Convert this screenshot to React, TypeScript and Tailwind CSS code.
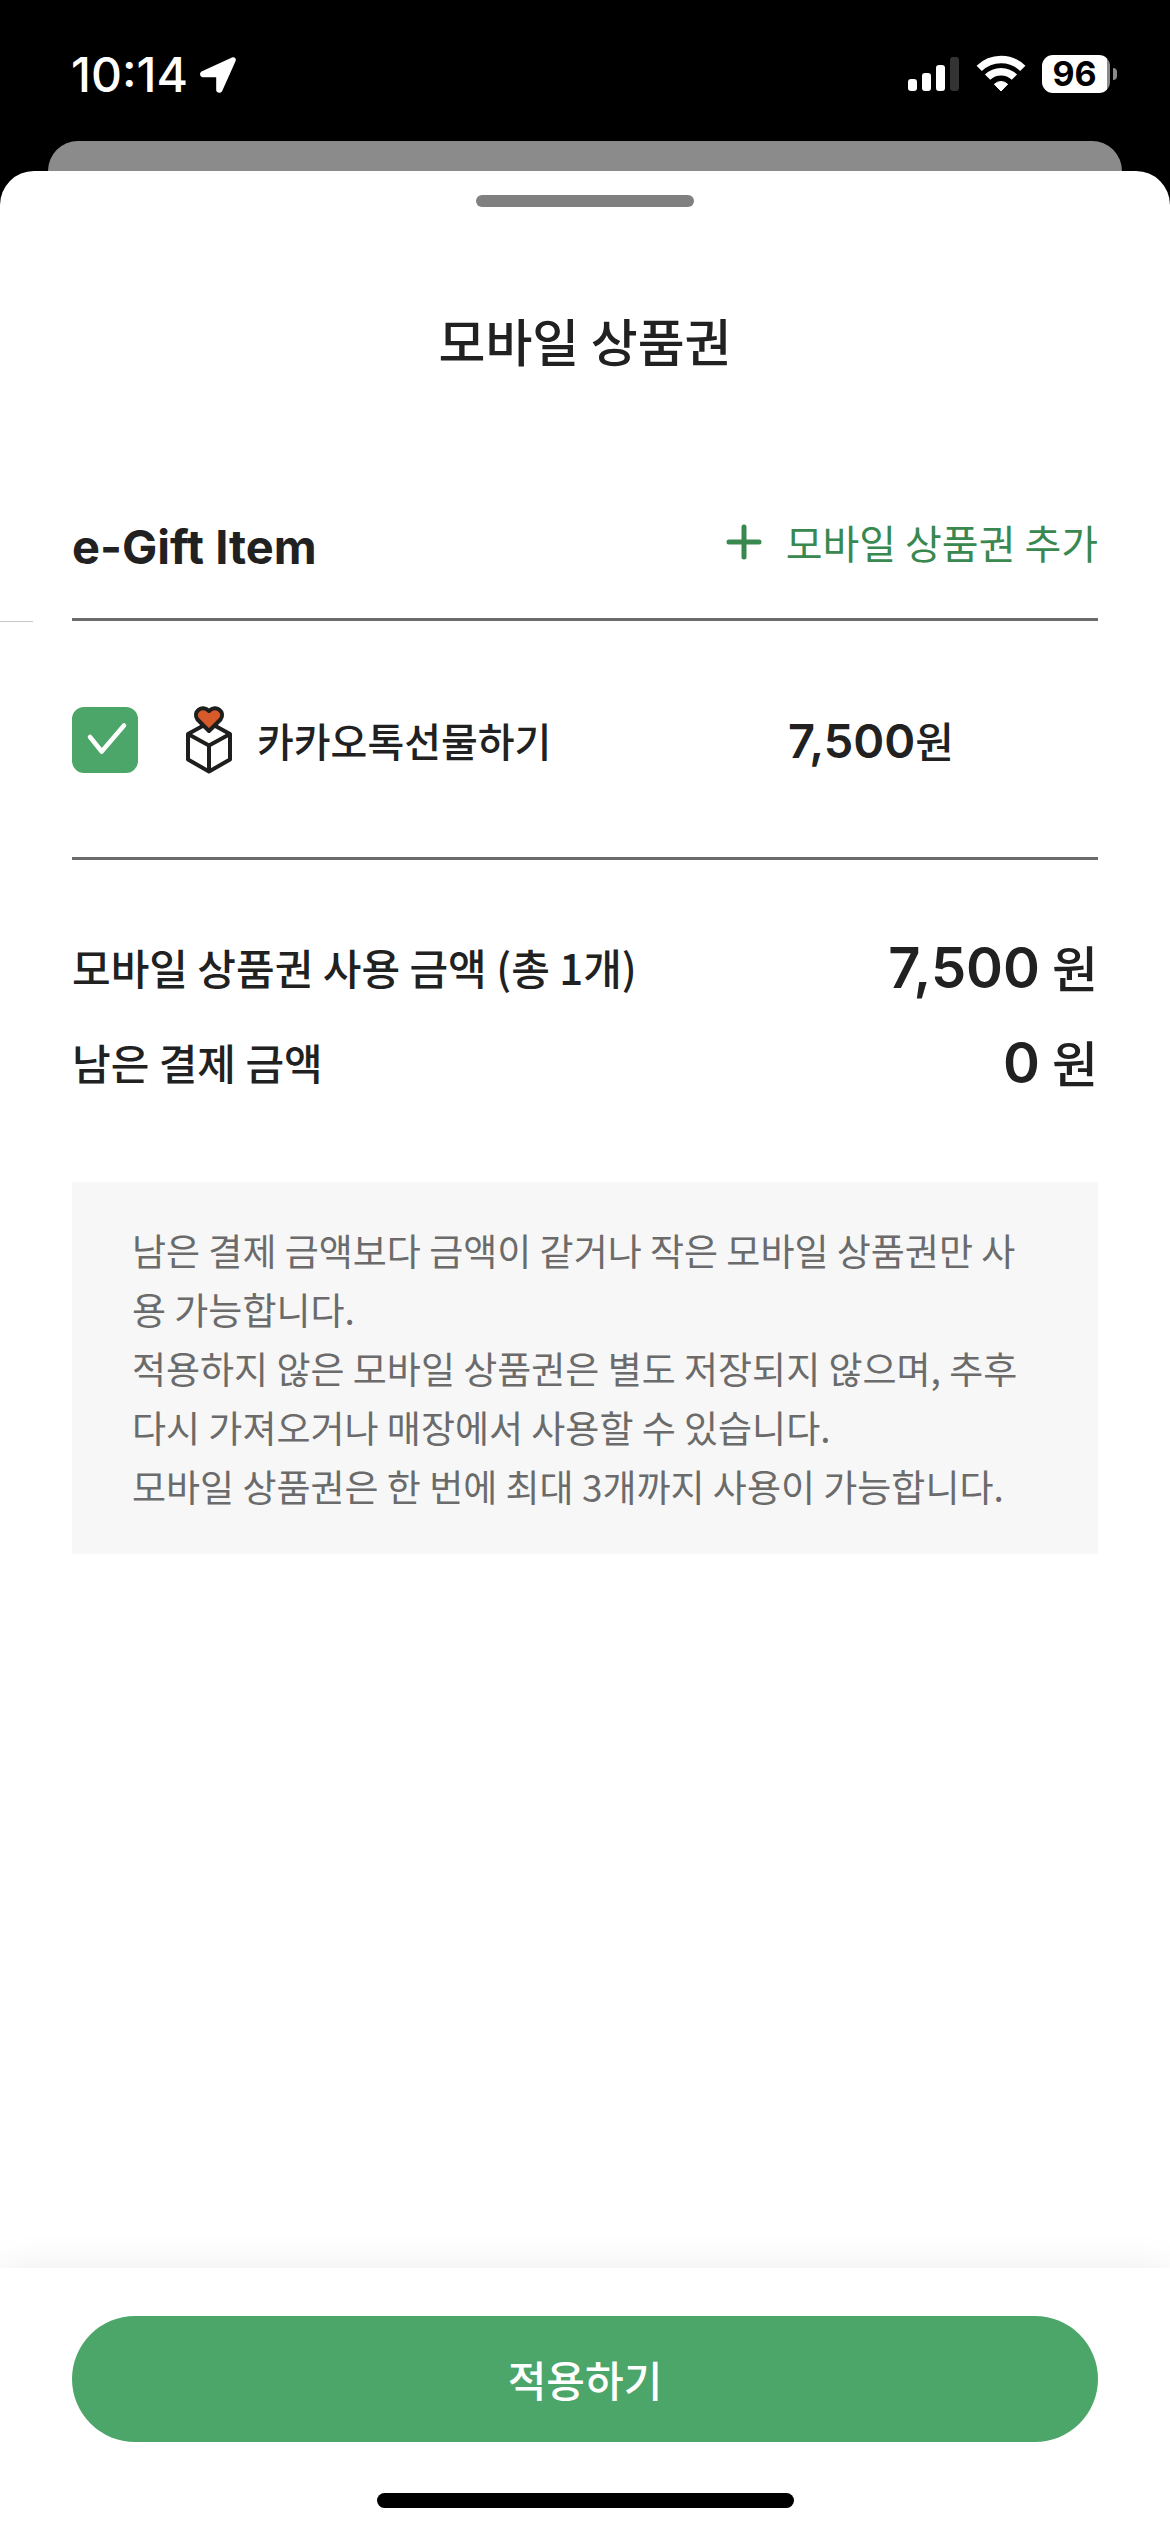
import { useState } from "react";

function StatusBar() {
  return (
    <header className="flex h-[141px] items-start justify-between bg-black pt-[46px] pr-[53px] pl-[71px] text-white">
      <div className="flex items-center gap-3">
        <time className="font-['Inter',sans-serif] text-[48px] leading-[58px] font-medium">10:14</time>
        <svg viewBox="0 0 36 36" className="size-9" fill="currentColor" aria-hidden="true">
          <path d="M32 .4C34.5-.6 36.6 1.500 35.600 4L22.200 34C21 36.800 16.200 36.200 16.200 33V20.300H3C-.4 20.300-1 15.600 2 14.300Z" />
        </svg>
      </div>
      <div className="flex items-center gap-4 pt-[9px]">
        <svg viewBox="0 0 52 38" className="h-[38px] w-[52px]" aria-hidden="true">
          <g fill="#fff">
            <rect x="0" y="24" width="9" height="12" rx="3" />
            <rect x="14" y="18" width="9" height="18" rx="3" />
            <rect x="28" y="10" width="9" height="26" rx="3" />
          </g>
          <rect x="42" y="2" width="9" height="34" rx="3" fill="#333" />
        </svg>
        <svg viewBox="0 0 50 38" className="h-[38px] w-[50px]" aria-hidden="true">
          <g fill="none" stroke="#fff" strokeWidth="7.500">
            <path d="M3.200 13.400A31 31 0 0 1 46.800 13.400" />
            <path d="M11.600 22.200A19 19 0 0 1 38.400 22.200" />
          </g>
          <path d="M25 36L18.400 29.200A9.500 9.500 0 0 1 31.600 29.200Z" fill="#fff" stroke="#fff" strokeWidth="1" strokeLinejoin="round" />
        </svg>
        <div className="flex items-center gap-[3px]">
          <div className="flex h-[38px] w-[68px] items-center justify-center rounded-[11px] bg-linear-to-r from-white from-96% to-[#8a8a8a] to-96% pr-[3px] font-['Inter',sans-serif] text-[34px] leading-[38px] font-bold text-black">
            96
          </div>
          <div className="h-3 w-1 rounded-r-full bg-[#8a8a8a]" />
        </div>
      </div>
    </header>
  );
}

function GiftIcon() {
  return (
    <svg viewBox="0 0 48 68" className="h-[68px] w-12" fill="none" stroke="#1e1e1c" strokeWidth="4" strokeLinejoin="round" aria-hidden="true">
      <path d="M24 16.500L45 28V53.500L24 65.500L3 53.500V28Z" />
      <path d="M3 28L24 39.500L45 28M24 39.500V65" />
      <path d="M24 25L12.500 13.500C7 6 17 -2 24 5C31 -2 41 6 35.500 13.500Z" fill="#d75a2b" />
    </svg>
  );
}

function Amount({ value }: { value: string }) {
  return (
    <dd className="flex items-baseline gap-3">
      <span className="font-['Inter',sans-serif] text-[56px] leading-[60px] font-semibold">{value}</span>
      <span className="text-[50px] leading-[60px] font-medium">원</span>
    </dd>
  );
}

const notes = [
  "남은 결제 금액보다 금액이 같거나 작은 모바일 상품권만 사용 가능합니다.",
  "적용하지 않은 모바일 상품권은 별도 저장되지 않으며, 추후 다시 가져오거나 매장에서 사용할 수 있습니다.",
  "모바일 상품권은 한 번에 최대 3개까지 사용이 가능합니다.",
];

export default function App() {
  const [checked, setChecked] = useState(true);

  return (
    <div className="flex min-h-screen flex-col bg-black font-['Noto_Sans_CJK_KR',sans-serif] text-[#212121]">
      <StatusBar />
      <div className="mx-12 -mb-[30px] h-[60px] rounded-t-[30px] bg-[#8b8b8b]" />

      <main className="relative flex grow flex-col rounded-t-[34px] bg-white">
        <div className="mx-auto mt-6 h-3 w-[218px] rounded-full bg-[#808080]" />
        <h1 className="mt-[103px] text-center text-[51px] leading-[60px] font-medium">모바일 상품권</h1>

        <section className="relative mt-[145px] px-[72px]">
          <div className="absolute bottom-0 left-0 h-px w-[33px] translate-y-px bg-[#c8c8c8]" />
          <div className="flex items-start justify-between border-b-[3px] border-[#6b6b6b] pb-[39px]">
            <h2 className="font-['Inter',sans-serif] text-[47px] leading-[64px] font-bold">e-Gift Item</h2>
            <button type="button" className="flex items-center gap-6 text-[40px] leading-[54px] text-[#388850]">
              <svg viewBox="0 0 36 36" className="size-9" stroke="currentColor" strokeWidth="5" strokeLinecap="round" aria-hidden="true">
                <path d="M18 3V33M3 18H33" />
              </svg>
              모바일 상품권 추가
            </button>
          </div>
        </section>

        <section className="mx-[72px] flex items-center border-b-[3px] border-[#6b6b6b] pt-[85px] pb-[83px]">
          <label className="flex items-center">
            <span className="relative">
              <input
                type="checkbox"
                checked={checked}
                onChange={(e) => setChecked(e.target.checked)}
                className="peer block size-[66px] appearance-none rounded-xl border-2 border-[#4ca669] bg-white checked:bg-[#4ca669]"
              />
              <svg viewBox="0 0 66 66" className="pointer-events-none absolute inset-0 hidden size-[66px] peer-checked:block" fill="none" stroke="#fff" strokeWidth="4.500" strokeLinecap="round" strokeLinejoin="round" aria-hidden="true">
                <path d="M18 30L29.700 44.500L52 18.500" />
              </svg>
            </span>
            <span className="ml-[47px]">
              <GiftIcon />
            </span>
            <span className="ml-6 text-[40px] leading-[60px] font-medium">카카오톡선물하기</span>
          </label>
          <p className="mr-[144px] ml-auto flex items-baseline">
            <span className="font-['Inter',sans-serif] text-[47px] leading-[60px] font-semibold">7,500</span>
            <span className="text-[42px] leading-[60px] font-medium">원</span>
          </p>
        </section>

        <dl className="mx-[72px] mt-[59px]">
          <div className="flex h-[95px] items-center justify-between">
            <dt className="text-[42px] leading-[60px] font-medium">모바일 상품권 사용 금액 (총 1개)</dt>
            <Amount value="7,500" />
          </div>
          <div className="flex h-[95px] items-center justify-between">
            <dt className="text-[42px] leading-[60px] font-medium">남은 결제 금액</dt>
            <Amount value="0" />
          </div>
        </dl>

        <div className="mx-[72px] mt-[73px] bg-[#f7f7f7] px-[60px] pt-[39px] pb-[38px] text-[37px] leading-[59px] text-[#6b6b6b]">
          {notes.map((note) => (
            <p key={note}>{note}</p>
          ))}
        </div>

        <footer className="mt-auto flex flex-col px-[72px] pt-12 pb-6 shadow-[0_0_36px_rgba(0,0,0,0.08)]">
          <button type="button" className="h-[126px] rounded-full bg-[#4ca669] text-[42px] leading-[60px] font-medium text-white">
            적용하기
          </button>
          <div className="mx-auto mt-[51px] h-[15px] w-[417px] rounded-full bg-black" />
        </footer>
      </main>
    </div>
  );
}
